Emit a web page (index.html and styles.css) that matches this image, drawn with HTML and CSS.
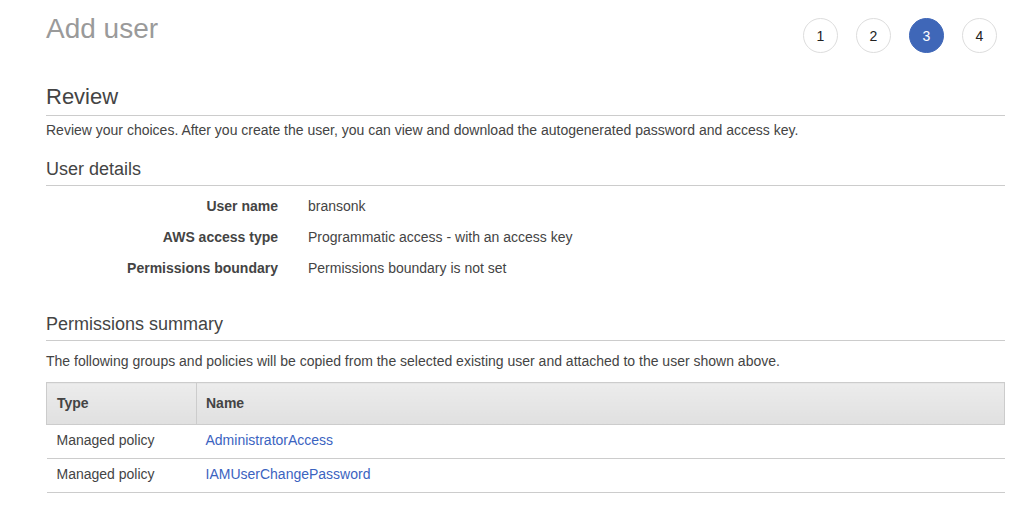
FILE: index.html
```html
<!DOCTYPE html>
<html>
<head>
<meta charset="utf-8">
<link rel="stylesheet" href="styles.css">
</head>
<body>
<div class="page">
  <div class="header">
    <h1 class="title">Add user</h1>
    <ol class="steps">
      <li class="step">1</li>
      <li class="step">2</li>
      <li class="step active">3</li>
      <li class="step">4</li>
    </ol>
  </div>

  <h2 class="section-title">Review</h2>
  <p class="intro">Review your choices. After you create the user, you can view and download the autogenerated password and access key.</p>

  <h3 class="sub-title">User details</h3>
  <div class="details">
    <div class="row"><div class="label">User name</div><div class="value">bransonk</div></div>
    <div class="row"><div class="label">AWS access type</div><div class="value">Programmatic access - with an access key</div></div>
    <div class="row"><div class="label">Permissions boundary</div><div class="value">Permissions boundary is not set</div></div>
  </div>

  <h3 class="sub-title perm-title">Permissions summary</h3>
  <p class="perm-intro">The following groups and policies will be copied from the selected existing user and attached to the user shown above.</p>

  <table class="grid">
    <thead>
      <tr><th class="col-type">Type</th><th class="col-name">Name</th></tr>
    </thead>
    <tbody>
      <tr><td>Managed policy</td><td class="col-name"><a href="#">AdministratorAccess</a></td></tr>
      <tr><td>Managed policy</td><td class="col-name"><a href="#">IAMUserChangePassword</a></td></tr>
    </tbody>
  </table>
</div>
</body>
</html>
```

FILE: styles.css
```css
html, body {
  margin: 0;
  padding: 0;
  background: #fff;
}
body {
  font-family: "Liberation Sans", Arial, sans-serif;
  color: #444;
  font-size: 14px;
  line-height: 20px;
}
.page {
  padding: 13px 24px 0 46px;
}
.header {
  display: flex;
  justify-content: space-between;
  align-items: flex-start;
}
.title {
  margin: 0;
  font-size: 28px;
  line-height: 32px;
  font-weight: normal;
  color: #9a9a9a;
}
.steps {
  list-style: none;
  margin: 5px 8px 0 0;
  padding: 0;
  display: flex;
  gap: 18px;
}
.step {
  width: 33px;
  height: 33px;
  border: 1px solid #dddddd;
  border-radius: 50%;
  display: flex;
  align-items: center;
  justify-content: center;
  font-size: 14px;
  color: #222;
  background: #fff;
}
.step.active {
  background: #3f67b8;
  border-color: #3f67b8;
  color: #fff;
}
.section-title {
  margin: 31px 0 0 0;
  font-size: 22px;
  line-height: 26px;
  font-weight: normal;
  color: #444;
  padding-bottom: 5px;
  border-bottom: 1px solid #cccccc;
}
.intro {
  margin: 4px 0 0 0;
}
.sub-title {
  margin: 18px 0 0 0;
  font-size: 18px;
  line-height: 22px;
  font-weight: normal;
  color: #444;
  padding-bottom: 5px;
  border-bottom: 1px solid #cccccc;
}
.details {
  margin-top: 5px;
}
.row {
  display: flex;
  padding: 5px 0 6px 0;
}
.label {
  width: 232px;
  text-align: right;
  font-weight: bold;
  color: #444;
}
.value {
  margin-left: 30px;
  color: #444;
}
.perm-title {
  margin-top: 29px;
}
.perm-intro {
  margin: 10px 0 0 0;
}
.grid {
  margin-top: 11px;
  width: 100%;
  border-collapse: collapse;
}
.grid th {
  text-align: left;
  font-weight: bold;
  color: #444;
  padding: 10px 10px 11px 10px;
  background: linear-gradient(#ececec, #e0e0e0);
  border: 1px solid #cccccc;
}
.grid th.col-type {
  width: 129px;
}
.grid th + th {
  border-left: 1px solid #d4d4d4;
}
.grid td {
  padding: 5px 10px 8px 10px;
  border-bottom: 1px solid #cccccc;
  color: #444;
}
.grid .col-name {
  padding-left: 9px;
}
.grid a {
  color: #3b63bf;
  text-decoration: none;
}
```
